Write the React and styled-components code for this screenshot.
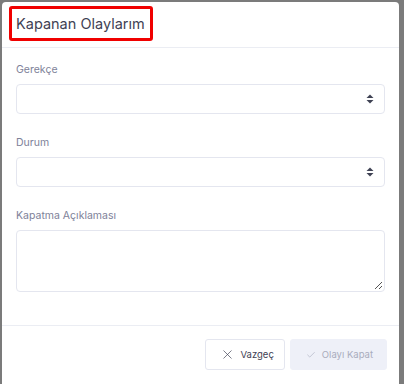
import React from 'react'
import styled, { createGlobalStyle } from 'styled-components'
import { X, Check } from 'lucide-react'

const GlobalStyle = createGlobalStyle`
  html, body {
    margin: 0;
    padding: 0;
    background: #7b7b7b;
    height: 100%;
    overflow: hidden;
  }
  body {
    font-family: Inter, "Noto Sans", sans-serif;
  }
`

const Modal = styled.div`
  margin: 2px 5px 0 2px;
  height: 382px;
  background: #fff;
  border-radius: 4px 4px 0 0;
  display: flex;
  flex-direction: column;
`

const Header = styled.div`
  height: 46px;
  padding: 0 7px 2px;
  box-sizing: border-box;
  display: flex;
  align-items: center;
  border-bottom: 1px solid #ebedf3;
`

const Title = styled.h5`
  margin: 0;
  padding: 0 5px 0 4px;
  height: 29px;
  display: flex;
  align-items: center;
  border: 3px solid #f00000;
  border-radius: 3px;
  font-size: 14.5px;
  font-weight: 400;
  color: #3f4254;
`

const Body = styled.div`
  padding: 16px 14px 0 14px;
  height: 278px;
  border-bottom: 1px solid #ebedf3;
  box-sizing: border-box;
`

const Field = styled.div`
  margin-bottom: ${p => p.gap || 0}px;
`

const Label = styled.label`
  display: block;
  font-size: 10.5px;
  color: #7e8299;
  margin-bottom: 8px;
  line-height: 12px;
`

const SelectBox = styled.div`
  height: 30px;
  border: 1px solid #e4e6ef;
  border-radius: 4px;
  box-sizing: border-box;
  display: flex;
  align-items: center;
  justify-content: flex-end;
  padding-right: 10px;
`

const TextArea = styled.div`
  position: relative;
  height: 62px;
  border: 1px solid #e4e6ef;
  border-radius: 4px;
  box-sizing: border-box;
`

const Grip = styled.svg`
  position: absolute;
  right: 1px;
  bottom: 1px;
`

const Footer = styled.div`
  display: flex;
  justify-content: flex-end;
  gap: 5px;
  padding: 13px 12px 0 0;
`

const Button = styled.button`
  height: 31px;
  padding: 0 ${p => p.padRight}px 0 ${p => p.padLeft}px;
  display: flex;
  align-items: center;
  gap: 6px;
  border-radius: 3px;
  font-family: inherit;
  font-size: 9.5px;
  cursor: pointer;
  border: 1px solid ${p => (p.muted ? '#eef0f8' : '#e4e6ef')};
  background: ${p => (p.muted ? '#eef0f8' : '#fff')};
  color: ${p => (p.muted ? '#a9acbd' : '#3f4254')};
`

const Arrows = () => (
  <svg width="8" height="10" viewBox="0 0 8 10">
    <path d="M4 0.5 L7.5 4 H0.5 Z" fill="#3f4254" />
    <path d="M4 9.5 L7.5 6 H0.5 Z" fill="#3f4254" />
  </svg>
)

export default function App() {
  return (
    <>
      <GlobalStyle />
      <Modal>
        <Header>
          <Title>Kapanan Olaylarım</Title>
        </Header>
        <Body>
          <Field gap={23}>
            <Label>Gerekçe</Label>
            <SelectBox>
              <Arrows />
            </SelectBox>
          </Field>
          <Field gap={23}>
            <Label>Durum</Label>
            <SelectBox>
              <Arrows />
            </SelectBox>
          </Field>
          <Field>
            <Label>Kapatma Açıklaması</Label>
            <TextArea>
              <Grip width="10" height="10" viewBox="0 0 10 10">
                <path d="M9 2 L2 9 M9 6 L6 9" stroke="#555" strokeWidth="1" />
              </Grip>
            </TextArea>
          </Field>
        </Body>
        <Footer>
          <Button padLeft={14} padRight={10}>
            <X size={15} strokeWidth={1.1} color="#3f4254" />
            Vazgeç
          </Button>
          <Button muted padLeft={15} padRight={13}>
            <Check size={10} strokeWidth={1.5} color="#a9acbd" />
            Olayı Kapat
          </Button>
        </Footer>
      </Modal>
    </>
  )
}
